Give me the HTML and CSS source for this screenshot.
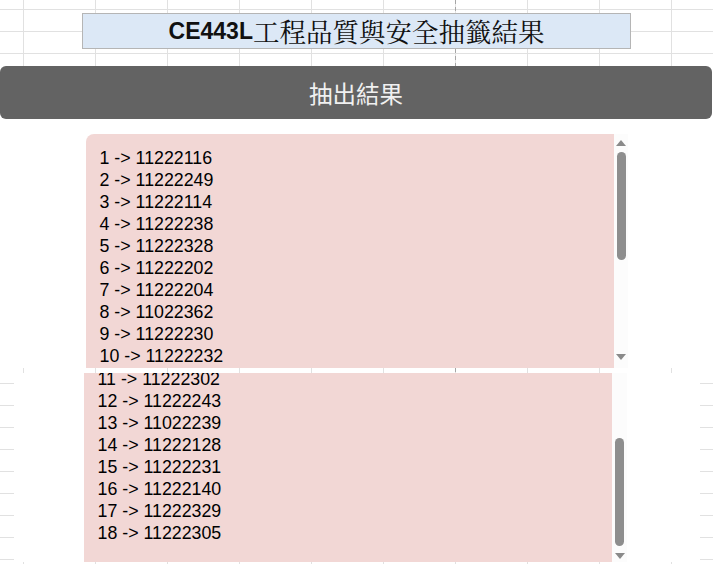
FILE: index.html
```html
<!DOCTYPE html>
<html lang="zh-Hant">
<head>
<meta charset="utf-8">
<title>CE443L工程品質與安全抽籤結果</title>
<link rel="stylesheet" href="styles.css">
</head>
<body>
<div class="page">
  <div class="sheet sheet-top">
    <div class="title-cell"><span class="title-code">CE443L</span><span class="title-zh">工程品質與安全抽籤結果</span></div>
  </div>
  <div class="bar">抽出結果</div>
  <div class="panel-top">
    <div class="listbox listbox-a">
      <div class="list list-a">
        <div class="line">1 -&gt; 11222116</div>
        <div class="line">2 -&gt; 11222249</div>
        <div class="line">3 -&gt; 11222114</div>
        <div class="line">4 -&gt; 11222238</div>
        <div class="line">5 -&gt; 11222328</div>
        <div class="line">6 -&gt; 11222202</div>
        <div class="line">7 -&gt; 11222204</div>
        <div class="line">8 -&gt; 11022362</div>
        <div class="line">9 -&gt; 11222230</div>
        <div class="line">10 -&gt; 11222232</div>
      </div>
      <div class="scrollbar scrollbar-a">
        <span class="arrow arrow-up"></span>
        <span class="thumb thumb-a"></span>
        <span class="spacer"></span>
        <span class="arrow arrow-down"></span>
      </div>
    </div>
  </div>
  <div class="sheet sheet-bottom">
    <div class="cover">
      <div class="listbox listbox-b">
        <div class="list list-b">
          <div class="lines-b">
            <div class="line">11 -&gt; 11222302</div>
            <div class="line">12 -&gt; 11222243</div>
            <div class="line">13 -&gt; 11022239</div>
            <div class="line">14 -&gt; 11222128</div>
            <div class="line">15 -&gt; 11222231</div>
            <div class="line">16 -&gt; 11222140</div>
            <div class="line">17 -&gt; 11222329</div>
            <div class="line">18 -&gt; 11222305</div>
          </div>
        </div>
        <div class="scrollbar scrollbar-b">
          <span class="thumb thumb-b"></span>
          <span class="spacer"></span>
          <span class="arrow arrow-down"></span>
        </div>
      </div>
    </div>
  </div>
</div>
</body>
</html>
```
FILE: styles.css
```css
html, body {
  margin: 0;
  padding: 0;
  background: #ffffff;
}

.page {
  width: 713px;
  height: 564px;
  overflow: hidden;
  font-family: "Liberation Sans", Arial, "Noto Sans CJK TC", sans-serif;
  color: #000000;
}

.sheet {
  box-sizing: border-box;
  background-color: #ffffff;
  background-image:
    linear-gradient(to bottom, #a6a6a6 0 4px, transparent 4px),
    linear-gradient(to right, #e1e1e1 0 1px, transparent 1px),
    linear-gradient(to bottom, #e1e1e1 0 1px, transparent 1px);
  background-size: 1px 7px, 72px 100%, 100% 22px;
  background-repeat: repeat-y, repeat, repeat;
}

.sheet-top {
  height: 66px;
  padding: 13px 0 0 82px;
  background-position: 455px 0, 23px 0, 0 9px;
}

.title-cell {
  box-sizing: border-box;
  width: 549px;
  height: 36px;
  background: #dce8f6;
  border: 1px solid #b5b5b5;
  display: flex;
  align-items: center;
  justify-content: center;
  color: #111111;
  line-height: 1;
}

.title-code {
  font-family: "Liberation Sans", Arial, sans-serif;
  font-weight: 700;
  font-size: 23px;
}

.title-zh {
  font-family: "Noto Serif CJK TC", "Noto Sans CJK TC", serif;
  font-weight: 400;
  font-size: 26.5px;
}

.bar {
  width: 712px;
  height: 53px;
  background: #636363;
  border-radius: 6px;
  display: flex;
  align-items: center;
  justify-content: center;
  color: #f0f0f0;
  font-family: "Noto Sans CJK TC", sans-serif;
  font-size: 23.5px;
}

.panel-top {
  box-sizing: border-box;
  height: 249px;
  padding: 15px 0 0 86px;
  background: #ffffff;
}

.listbox {
  display: flex;
}

.listbox-a {
  height: 234px;
}

.list {
  box-sizing: border-box;
  width: 528px;
  height: 100%;
  background: #f2d7d5;
  overflow: hidden;
  font-size: 17.8px;
  line-height: 22px;
  padding-left: 13.5px;
}

.list-a {
  padding-top: 13px;
  border-top-left-radius: 8px;
}

.line {
  white-space: pre;
}

.scrollbar {
  box-sizing: border-box;
  height: 100%;
  background: #fcfcfc;
  display: flex;
  flex-direction: column;
  align-items: center;
}

.scrollbar-a {
  width: 14px;
  padding: 6px 0 8px;
}

.scrollbar-b {
  width: 15px;
  padding: 0 0 3px;
}

.arrow {
  width: 0;
  height: 0;
  border-left: 5px solid transparent;
  border-right: 5px solid transparent;
}

.arrow-up {
  border-bottom: 6px solid #8a8a8a;
}

.arrow-down {
  border-top: 6px solid #8a8a8a;
}

.thumb {
  width: 9px;
  height: 108px;
  border-radius: 5px;
  background: #8e8e8e;
}

.thumb-a {
  margin-top: 6px;
}

.thumb-b {
  margin-top: 65px;
}

.spacer {
  flex: 1;
}

.sheet-bottom {
  height: 196px;
  padding: 5px 13px 2px 14px;
  background-position: 455px 0, 23px 0, 0 15px;
}

.cover {
  box-sizing: border-box;
  height: 189px;
  background: #ffffff;
  padding-left: 70px;
}

.listbox-b {
  height: 189px;
}

.lines-b {
  margin-top: -5px;
}
```
